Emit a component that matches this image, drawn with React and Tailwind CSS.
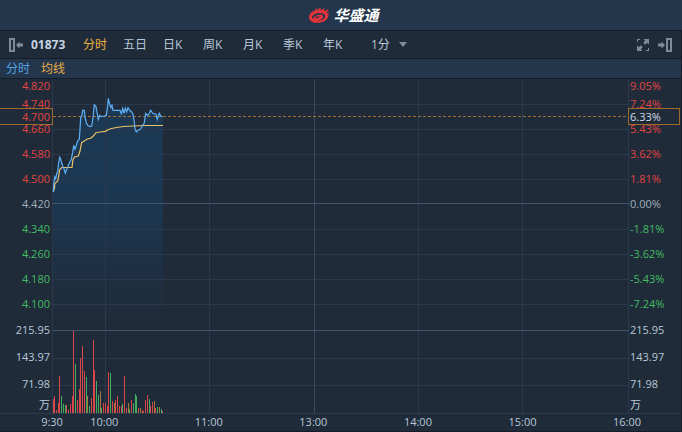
import { useState } from "react";

const PERIODS = ["分时", "五日", "日K", "周K", "月K", "季K", "年K"];

const PRICE_ROWS = [
  { price: "4.740", change: "7.24%", color: "text-[#e24444]" },
  { price: "4.660", change: "5.43%", color: "text-[#e24444]" },
  { price: "4.580", change: "3.62%", color: "text-[#e24444]" },
  { price: "4.500", change: "1.81%", color: "text-[#e24444]" },
  { price: "4.420", change: "0.00%", color: "text-[#a3afbd]" },
  { price: "4.340", change: "-1.81%", color: "text-[#43bc63]" },
  { price: "4.260", change: "-3.62%", color: "text-[#43bc63]" },
  { price: "4.180", change: "-5.43%", color: "text-[#43bc63]" },
  { price: "4.100", change: "-7.24%", color: "text-[#43bc63]" },
];

const VOLUME_ROWS = ["215.95", "143.97", "71.98"];

const TIMES = ["10:00", "11:00", "13:00", "14:00", "15:00"];

const PRICE_LINE =
  "1.3,113 1.7,105.3 2.7,97.7 3.7,99.7 4.7,95 5.7,92 6.7,83.7 7.7,78.3 8.7,80.3 9.7,84.3 10.7,87 12,89.7 13.3,94.3 14.7,90.3 15.7,88.7 16.7,85.3 18,83 19.3,80.3 20.7,73 21.7,66.3 23,70.3 24,67.7 25,63.7 26,61.7 27.3,60.3 28,50.3 28.7,38.7 30,36.3 30.7,31.3 32.3,31.3 33.3,39.7 34.3,43.7 35.7,46.3 38,47.7 39.7,47 41,38.7 42.3,25.7 44,27.7 45,33 46.3,40.3 47.7,36.3 49.3,37.7 52.3,37 54.3,36.3 55.7,27 56.3,19.3 57.7,25.3 59,28.7 60,26.3 61,31.3 68,31.3 69.3,34.7 70.7,29.3 72,34.3 73.3,29 74.7,32.7 76,28.7 77.7,31.3 79.7,33 81,35.3 82,41 83,49.7 84.3,53 86,51.3 88.3,50.3 90.3,47 92.3,43.7 93.7,34.3 95.7,36.7 97.3,34.3 98.7,31.3 100.7,34.3 104,35.3 105.3,40.3 107.3,34.3 108.7,37 110.7,37.7";

const AVERAGE_LINE =
  "1.3,113 2.7,108 2.7,104.7 5.7,102 6.7,97 7.7,90.5 9.7,88.5 20,88.5 21,80.5 22.7,78 26.3,77 28,72 29.7,63.5 32.3,62 35.3,60 38.7,59.3 41.3,57 44,53.7 48,53 53.3,52.3 56.3,50.5 59.7,49.5 64.7,48.5 71.3,47.5 81.3,47 93,46.5 94,46.5 111,46.5";

// one bar per minute: height and colour (r = up, g = down, y = flat)
const VOLUME_HEIGHTS = [
  14, 17, 3, 10, 37, 17, 9, 8, 8, 3, 9, 17, 82, 49, 13, 24, 55, 67, 42, 36, 17,
  7, 15, 73, 43, 32, 18, 22, 5, 10, 10, 7, 41, 40, 12, 10, 13, 17, 7, 7, 9, 37,
  5, 10, 4, 13, 10, 19, 17, 5, 5, 3, 2, 13, 18, 14, 7, 11, 12, 5, 6, 6, 4, 2,
];
const VOLUME_COLORS =
  "rrrrrgggrrrrrgrrrrrgygrrrggygrrrrgryrrrrgrrygrgggryrrrrgrryrgygr";
const BAR_FILL = { r: "#d8474a", g: "#41ad60", y: "#a8763c" };

function Logo() {
  return (
    <div className="flex items-center gap-1 pl-1.5">
      <svg width="20" height="16" viewBox="0 0 20 16" fill="#e3343a">
        <path
          fillRule="evenodd"
          d="M0 10C0.200 7.500 2 5 5 3.500C4.300 4.500 4.300 5 4.600 5.200C5.500 3.500 6.800 1.800 8.500 1C8 2.200 8 3 8.300 3.800C9.300 2.300 10.500 1 12 0.300C11.500 1.500 11.500 2.600 11.800 3.500C13 2.800 14.300 1.800 15.500 1C15 2.200 14.900 3 15 4C16.500 3.700 18 3 19.800 2C19.200 3.600 18.500 4.800 17.500 5.800C18.300 6 19 5.900 20 5.600C19.500 6.800 19.300 7.800 19.200 9C18.800 13 14 15.800 8.500 15.800C3.500 15.800 0 13.800 0 10ZM3 10.300C2.800 11 3.200 11.600 3.800 11.700C5 9.500 8 7.800 11 7.600C13 7.500 14.200 8.300 14.100 9.400C14 11.500 11 13.400 7.500 13.800C11.500 14 16 12.200 16.200 9C16.300 6.900 14 5.900 11 5.900C7 5.900 3.800 7.700 3 10.300ZM6 11.700C7 11 7.800 11.200 8.600 11C9.600 10.600 9.800 9.900 11 9.500C9.500 9 6.500 9.900 6 11.700Z"
        />
      </svg>
      <span className="text-[15px] leading-4 font-bold italic text-white">
        华盛通
      </span>
    </div>
  );
}

function PanelIcon() {
  return (
    <svg width="14" height="14" viewBox="0 0 14 14" fill="#7e8b9b">
      <path fillRule="evenodd" d="M0 0H6V14H0ZM2 2V12H4V2Z" />
      <path d="M7 7L10.500 3.500V5.500H14V8.500H10.500V10.500Z" />
    </svg>
  );
}

function ExpandIcon() {
  return (
    <svg width="12" height="12" viewBox="0 0 12 12" fill="#7e8b9b">
      <path d="M0 0H3V1H1V3H0ZM9 12H12V9H11V11H9Z" />
      <path d="M12 0V5.500L10.200 3.800L8.200 5.800L6.200 3.800L8.200 1.800L6.500 0ZM0 12V6.500L1.800 8.200L3.800 6.200L5.800 8.200L3.800 10.200L5.500 12Z" />
    </svg>
  );
}

function Chart() {
  return (
    <svg
      className="block h-full w-full"
      viewBox="0 0 577 334"
      preserveAspectRatio="none"
    >
      <defs>
        <linearGradient id="area" gradientUnits="userSpaceOnUse" x1="0" y1="20" x2="0" y2="251">
          <stop offset="0" stopColor="#1b3d5c" stopOpacity="0.8" />
          <stop offset="0.5" stopColor="#1b3a58" stopOpacity="0.75" />
          <stop offset="1" stopColor="#1d3450" stopOpacity="0" />
        </linearGradient>
      </defs>
      <polygon points={`1.3,251 ${PRICE_LINE} 111,251`} fill="url(#area)" />
      <g fill="#2a394d" shapeRendering="crispEdges">
        {[25, 50, 75, 100, 150, 175, 200, 225, 279, 306].map((y) => (
          <rect key={y} x="0" y={y} width="577" height="1" />
        ))}
        {[0, 53, 157, 366, 470, 576].map((x) => (
          <rect key={x} x={x} y="0" width="1" height="334" />
        ))}
      </g>
      <g fill="#43556f" shapeRendering="crispEdges">
        <rect x="0" y="124" width="577" height="1" />
        <rect x="0" y="251" width="577" height="1" />
        <rect x="262" y="0" width="1" height="334" fill="#3a4a60" />
      </g>
      <g shapeRendering="crispEdges">
        {VOLUME_HEIGHTS.map((height, i) => (
          <rect
            key={i}
            x={Math.floor((i * 576) / 330) + 1}
            y={334 - height}
            width="1"
            height={height}
            fill={BAR_FILL[VOLUME_COLORS[i]]}
          />
        ))}
      </g>
      <path d="M1 37.500H577" stroke="#a26d2e" strokeDasharray="3 2" />
      <polyline points={AVERAGE_LINE} fill="none" stroke="#ecc267" strokeWidth="1.2" />
      <polyline points={PRICE_LINE} fill="none" stroke="#5fb0f5" strokeWidth="1.2" />
    </svg>
  );
}

export default function App() {
  const [period, setPeriod] = useState("分时");

  return (
    <div className="bg-[#1f2b38] font-['Open_Sans','Noto_Sans_CJK_SC',sans-serif] text-[#b9c8d9]">
      <header className="flex h-[31px] items-center justify-center border-b border-[#151d2a] bg-[#24364b]">
        <Logo />
      </header>

      <nav className="flex h-7 items-center border-r border-b border-[#151d2a] px-[9px] text-xs">
        <button type="button" aria-label="Collapse left panel">
          <PanelIcon />
        </button>
        <span className="ml-2 w-[52px] font-bold text-[#c5d3e2]">01873</span>
        {PERIODS.map((name) => (
          <button
            key={name}
            type="button"
            onClick={() => setPeriod(name)}
            className={`w-10 text-left ${period === name ? "text-[#efb041]" : ""}`}
          >
            {name}
          </button>
        ))}
        <div className="relative ml-2 flex items-center">
          <select
            aria-label="Minutes"
            className="w-9 appearance-none bg-transparent"
          >
            <option>1分</option>
            <option>5分</option>
            <option>15分</option>
          </select>
          <svg
            className="pointer-events-none absolute right-0"
            width="8"
            height="5"
            viewBox="0 0 8 5"
            fill="#7e8b9b"
          >
            <path d="M0 0H8L4 5Z" />
          </svg>
        </div>
        <div className="ml-auto flex items-center gap-[9px]">
          <button type="button" aria-label="Full screen">
            <ExpandIcon />
          </button>
          <button type="button" aria-label="Collapse right panel" className="rotate-180">
            <PanelIcon />
          </button>
        </div>
      </nav>

      <div className="flex h-5 items-center gap-[11px] border-r border-b border-[#151d2a] bg-[#24364b] px-1.5 text-xs">
        <span className="text-[#52a2e8]">分时</span>
        <span className="text-[#e6ad45]">均线</span>
      </div>

      <main className="border-r border-[#151d2a] text-[11px]">
        <div className="relative flex h-[334px]">
          <div className="flex w-[52px] flex-col pr-0.5 text-right">
            <div className="h-[13px] leading-[13px] text-[#e24444]">4.820</div>
            {PRICE_ROWS.map((row) => (
              <div key={row.price} className={`h-[25px] leading-[23px] ${row.color}`}>
                {row.price}
              </div>
            ))}
            {VOLUME_ROWS.map((volume) => (
              <div key={volume} className="h-[27px] leading-[25px]">
                {volume}
              </div>
            ))}
            <div className="leading-[13px]">万</div>
          </div>

          <div className="min-w-0 flex-1">
            <Chart />
          </div>

          <div className="flex w-[52px] flex-col pl-px">
            <div className="h-[13px] leading-[13px] text-[#e24444]">9.05%</div>
            {PRICE_ROWS.map((row) => (
              <div key={row.change} className={`h-[25px] leading-[23px] ${row.color}`}>
                {row.change}
              </div>
            ))}
            {VOLUME_ROWS.map((volume) => (
              <div key={volume} className="h-[27px] leading-[25px]">
                {volume}
              </div>
            ))}
            <div className="leading-[13px]">万</div>
          </div>

          {/* current price markers */}
          <div className="absolute top-[29px] left-0 h-[17px] w-[53px] border border-l-0 border-[#a06a2c] bg-[#1f2b38] pr-0.5 text-right leading-[15px] text-[#e24444]">
            4.700
          </div>
          <div className="absolute top-[29px] right-px h-[17px] w-[52px] border border-[#a06a2c] bg-[#1f2b38] pl-px leading-[15px] text-[#cfdbe8]">
            6.33%
          </div>
        </div>

        <div className="flex h-[19px] items-center border-t border-b border-t-[#2c3c50] border-b-[#151d2a] pr-[54px] pl-[52px]">
          <div className="flex flex-1">
            <span className="flex w-0 justify-center">9:30</span>
          </div>
          {TIMES.map((time) => (
            <div key={time} className="flex flex-[2]">
              <span className="flex w-0 justify-center">{time}</span>
            </div>
          ))}
          <span className="flex w-0 justify-center">16:00</span>
        </div>
      </main>
    </div>
  );
}
